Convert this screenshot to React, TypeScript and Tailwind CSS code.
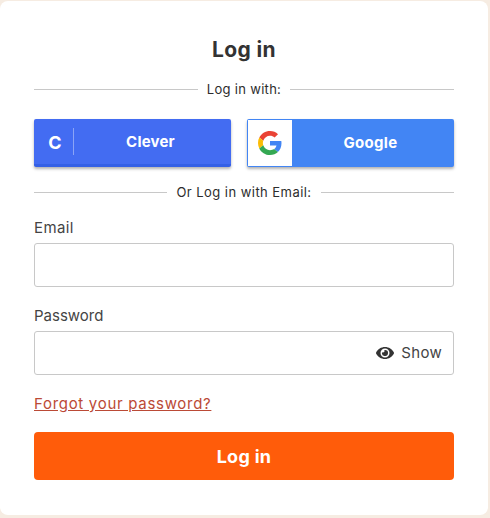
import React from 'react';

const font = "font-['Inter','Liberation_Sans',sans-serif]";

const Divider: React.FC<{ label: string; tracking: string }> = ({ label, tracking }) => (
  <div className="flex items-center h-4">
    <div className="flex-1 h-px bg-[#c8c8c8]" />
    <span className={`px-[9px] text-[13px] leading-4 text-[#2d2d2d] ${tracking}`}>{label}</span>
    <div className="flex-1 h-px bg-[#c8c8c8]" />
  </div>
);

const GoogleLogo = () => (
  <svg width="24" height="24" viewBox="0 0 48 48">
    <path fill="#EA4335" d="M24 9.5c3.54 0 6.71 1.22 9.21 3.6l6.85-6.85C35.9 2.38 30.47 0 24 0 14.62 0 6.51 5.38 2.56 13.22l7.98 6.19C12.43 13.72 17.74 9.5 24 9.5z" />
    <path fill="#4285F4" d="M46.98 24.55c0-1.57-.15-3.09-.38-4.55H24v9.02h12.94c-.58 2.96-2.26 5.48-4.78 7.18l7.73 6c4.51-4.18 7.09-10.36 7.09-17.65z" />
    <path fill="#FBBC05" d="M10.53 28.59c-.48-1.45-.76-2.99-.76-4.59s.27-3.14.76-4.59l-7.98-6.19C.92 16.46 0 20.12 0 24c0 3.88.92 7.54 2.56 10.78l7.97-6.19z" />
    <path fill="#34A853" d="M24 48c6.48 0 11.93-2.13 15.89-5.81l-7.73-6c-2.15 1.45-4.92 2.3-8.16 2.3-6.26 0-11.57-4.22-13.47-9.91l-7.98 6.19C6.51 42.62 14.62 48 24 48z" />
  </svg>
);

// filled eye, same shape as the font-awesome one in the password field
const EyeIcon = () => (
  <svg width="18" height="12" viewBox="0 0 576 384" fill="#333333">
    <path d="M572.52 176.6C518.29 70.8 410.93 0 288 0S57.68 70.8 3.48 176.6a32.35 32.35 0 0 0 0 30.8C57.71 313.2 165.07 384 288 384s230.32-70.8 284.52-176.6a32.35 32.35 0 0 0 0-30.8zM288 336a144 144 0 1 1 144-144 143.93 143.93 0 0 1-144 144zm0-240a95.31 95.31 0 0 0-25.31 3.79 47.85 47.85 0 0 1-66.9 66.9A95.78 95.78 0 1 0 288 96z" />
  </svg>
);

export default function App() {
  return (
    <div className={`${font} w-[490px] h-[518px] bg-[#f6ece2] pt-px pr-[2px] pb-[3px]`}>
      <div className="h-full bg-white rounded-[8px] px-[34px] pt-[37px]">
        <h1 className="text-center text-[21px] leading-6 font-bold text-[#333333] tracking-[0.4px]">Log in</h1>

        <div className="mt-[19px]">
          <Divider label="Log in with:" tracking="tracking-[0.3px]" />
        </div>

        <div className="mt-[22px] flex gap-4">
          <button className="w-[197px] h-[48px] flex items-center rounded-[2px] bg-[#436cf2] border-b-[3px] border-[#3460e6] shadow-[0_2px_3px_rgba(0,0,0,0.3)] text-white">
            <span className="w-[39px] text-center text-[18px] font-bold leading-none pt-[3px] pl-[3px]">C</span>
            <span className="h-[27px] w-px bg-[#8ba4f6]" />
            <span className="flex-1 text-center text-[15px] font-bold tracking-[0.2px] pr-[4px] pt-[2px]">Clever</span>
          </button>
          <button className="w-[207px] h-[48px] flex items-center rounded-[2px] bg-[#4285f4] p-px shadow-[0_2px_3px_rgba(0,0,0,0.3)] text-white">
            <span className="w-[44px] h-[46px] bg-white flex items-center justify-center shrink-0">
              <GoogleLogo />
            </span>
            <span className="flex-1 text-center text-[15px] font-bold tracking-[0.3px] pr-[4px]">Google</span>
          </button>
        </div>

        <div className="mt-[17px]">
          <Divider label="Or Log in with Email:" tracking="tracking-[0.45px]" />
        </div>

        <label className="block mt-[18px] text-[15px] leading-5 text-[#444444] tracking-[0.4px]">Email</label>
        <div className="mt-[5px] h-[44px] border border-[#c8c8c8] rounded-[3px] bg-white" />

        <label className="block mt-[19px] text-[15px] leading-5 text-[#444444]">Password</label>
        <div className="mt-[5px] h-[44px] border border-[#c8c8c8] rounded-[3px] bg-white flex items-center justify-end pr-[11px]">
          <EyeIcon />
          <span className="ml-[7px] text-[15px] text-[#444444] tracking-[0.3px] pt-[1px]">Show</span>
        </div>

        <a href="#" className="block mt-[19px] text-[15px] leading-5 text-[#bb4a36] underline tracking-[0.7px]">Forgot your password?</a>

        <button className="mt-[18px] w-full h-[48px] rounded-[4px] bg-[#ff5c0a] text-white text-[18px] font-bold tracking-[0.3px]">Log in</button>
      </div>
    </div>
  );
}
